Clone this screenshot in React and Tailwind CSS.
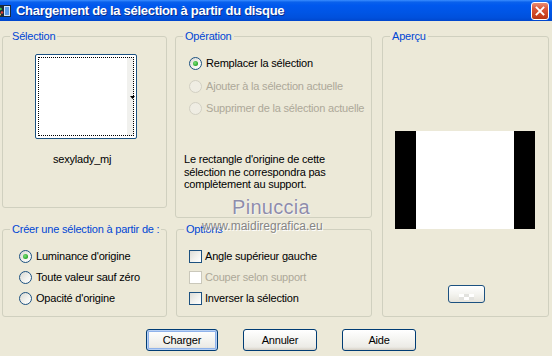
import React from "react";

function Radio({ checked, disabled }) {
  return (
    <span
      className={
        disabled
          ? "w-[13px] h-[13px] shrink-0 rounded-full border border-[#D2D0C3] bg-[#EFEDE3] flex items-center justify-center"
          : "w-[13px] h-[13px] shrink-0 rounded-full border border-[#1C5180] bg-[linear-gradient(135deg,#D8D8D2_0%,#F4F4F0_60%,#FFFFFF_100%)] flex items-center justify-center"
      }
    >
      {checked && (
        <span className="w-[5px] h-[5px] rounded-full bg-[radial-gradient(circle_at_40%_40%,#7BE07B_0%,#27A627_70%)]" />
      )}
    </span>
  );
}

function Check({ disabled }) {
  return (
    <span
      className={
        disabled
          ? "w-[13px] h-[13px] shrink-0 border border-[#CAC8BB] bg-white"
          : "w-[13px] h-[13px] shrink-0 border border-[#1C5180] bg-[linear-gradient(135deg,#DCDCD7_0%,#F2F2EE_55%,#FFFFFF_100%)]"
      }
    />
  );
}

function Group({ label, className, children }) {
  return (
    <div className={"relative border border-[#D0D0BF] rounded-[3px] " + className}>
      <span className="absolute left-[7px] top-[-7px] px-[2px] bg-[#ECE9D8] text-[#0046D5] leading-[13px] whitespace-nowrap">
        {label}
      </span>
      {children}
    </div>
  );
}

function XPButton({ children, isDefault, className }) {
  return (
    <div
      className={
        "h-[22px] rounded-[3px] border border-[#003C74] bg-[linear-gradient(to_bottom,#FFFFFF_0%,#F6F6F3_40%,#ECEBE6_85%,#D6D0C5_100%)] flex items-center justify-center text-black " +
        (isDefault ? "shadow-[inset_0_0_0_1px_#B7D0F4,inset_0_0_0_2px_#8FB2EA] " : "") +
        className
      }
    >
      {children}
    </div>
  );
}

export default function App() {
  return (
    <div className="relative w-[552px] h-[356px] overflow-hidden bg-[#ECE9D8] font-['Liberation_Sans',Arial,sans-serif] text-[11px] tracking-[-0.2px] text-black flex flex-col">
      {/* Title bar */}
      <div className="h-[21px] shrink-0 flex items-center bg-[linear-gradient(to_bottom,#3A8DFF_0%,#0A61EC_10%,#0058EE_25%,#0055E5_60%,#0050DC_85%,#0046CC_100%)]">
        <svg width="14" height="14" viewBox="0 0 14 14" className="ml-[-2px] shrink-0">
          <rect x="0" y="1" width="13" height="12" fill="#1B2A3A" />
          <rect x="6" y="2" width="6" height="10" fill="#CFE4FF" />
          <rect x="7" y="3" width="4" height="8" fill="#5A9BE8" />
          <circle cx="2.5" cy="5" r="1.3" fill="#36C24A" />
          <circle cx="4" cy="8.5" r="1.3" fill="#E0403A" />
          <circle cx="2" cy="10.5" r="1" fill="#F2C84B" />
        </svg>
        <span className="ml-[4px] text-white font-bold text-[13px] tracking-[-0.3px] leading-[21px] [text-shadow:1px_1px_0_#0A2D8C] font-['Liberation_Sans',Arial,sans-serif]">
          Chargement de la sélection à partir du disque
        </span>
        <div className="ml-auto mr-[3px] w-[18px] h-[18px] rounded-[3px] border border-white bg-[linear-gradient(to_bottom,#E88D74_0%,#D9573A_35%,#C8401E_80%,#B53514_100%)] flex items-center justify-center">
          <svg width="10" height="10" viewBox="0 0 10 10">
            <path d="M1.5 1.5 L8.5 8.5 M8.5 1.5 L1.5 8.5" stroke="white" strokeWidth="1.8" strokeLinecap="square" />
          </svg>
        </div>
      </div>

      {/* Body */}
      <div className="flex-1 flex flex-col pl-[2px] pt-[15px]">
        <div className="flex">
          {/* Column 1 */}
          <div className="w-[165px] flex flex-col">
            <Group label="Sélection" className="h-[172px]">
              <div className="flex flex-col items-start pl-[32px] pt-[17px]">
                <div className="relative w-[102px] h-[85px] rounded-[2px] border border-[#1C5180] bg-white p-[2px]">
                  <div className="absolute right-[2px] top-[2px] bottom-[2px] w-[7px] bg-[#F1F1EE]" />
                  <div className="relative w-full h-full border border-dotted border-black" />
                  <svg width="5" height="3" viewBox="0 0 5 3" className="absolute left-[94px] top-[41px]">
                    <path d="M0 0 H5 L2.5 3 Z" fill="black" />
                  </svg>
                </div>
                <div className="ml-[18px] mt-[14px] leading-[13px]">sexylady_mj</div>
              </div>
            </Group>
            <Group label="Créer une sélection à partir de :" className="mt-[21px] h-[88px]">
              <div className="flex flex-col pl-[16px] pt-[18px] gap-[5px]">
                <div className="h-[16px] flex items-center gap-[4px]">
                  <Radio checked />
                  <span>Luminance d'origine</span>
                </div>
                <div className="h-[16px] flex items-center gap-[4px]">
                  <Radio />
                  <span>Toute valeur sauf zéro</span>
                </div>
                <div className="h-[16px] flex items-center gap-[4px]">
                  <Radio />
                  <span>Opacité d'origine</span>
                </div>
              </div>
            </Group>
          </div>

          {/* Column 2 */}
          <div className="ml-[8px] w-[197px] flex flex-col">
            <Group label="Opération" className="h-[182px]">
              <div className="flex flex-col pl-[13px] pt-[18px]">
                <div className="h-[16px] flex items-center gap-[4px]">
                  <Radio checked />
                  <span>Remplacer la sélection</span>
                </div>
                <div className="mt-[7px] h-[16px] flex items-center gap-[4px] text-[#ACA899]">
                  <Radio disabled />
                  <span>Ajouter à la sélection actuelle</span>
                </div>
                <div className="mt-[6px] h-[16px] flex items-center gap-[4px] text-[#ACA899]">
                  <Radio disabled />
                  <span>Supprimer de la sélection actuelle</span>
                </div>
                <div className="mt-[37px] ml-[-5px] leading-[12.6px]">
                  Le rectangle d'origine de cette
                  <br />
                  sélection ne correspondra pas
                  <br />
                  complètement au support.
                </div>
              </div>
            </Group>
            <Group label="Options" className="mt-[11px] h-[88px] ml-[1px]">
              <div className="flex flex-col pl-[12px] pt-[18px] gap-[5px]">
                <div className="h-[16px] flex items-center gap-[3px]">
                  <Check />
                  <span>Angle supérieur gauche</span>
                </div>
                <div className="h-[16px] flex items-center gap-[3px] text-[#ACA899]">
                  <Check disabled />
                  <span>Couper selon support</span>
                </div>
                <div className="h-[16px] flex items-center gap-[3px]">
                  <Check />
                  <span>Inverser la sélection</span>
                </div>
              </div>
            </Group>
          </div>

          {/* Column 3 */}
          <div className="ml-[10px] w-[167px]">
            <Group label="Aperçu" className="h-[281px]">
              <div className="flex flex-col items-start pl-[12px] pt-[94px]">
                <div className="flex w-[140px] h-[98px]">
                  <div className="w-[21px] bg-black" />
                  <div className="flex-1 bg-white" />
                  <div className="w-[21px] bg-black" />
                </div>
                <div className="ml-[53px] mt-[56px] w-[37px] h-[18px] rounded-[3px] border border-[#1C5180] bg-[linear-gradient(to_bottom,#FFFFFF_0%,#F4F4F0_50%,#E6E4DC_100%)] flex items-end justify-center pb-[2px]">
                  <svg width="15" height="6" viewBox="0 0 15 6">
                    <rect x="0" y="0" width="5" height="3" fill="#FFFFFF" />
                    <rect x="5" y="3" width="5" height="3" fill="#FFFFFF" />
                    <rect x="10" y="0" width="5" height="3" fill="#FFFFFF" />
                    <rect x="5" y="0" width="5" height="3" fill="#E2E2DE" />
                    <rect x="0" y="3" width="5" height="3" fill="#E2E2DE" />
                    <rect x="10" y="3" width="5" height="3" fill="#E2E2DE" />
                  </svg>
                </div>
              </div>
            </Group>
          </div>
        </div>

        {/* Buttons */}
        <div className="mt-[12px] ml-[144px] flex gap-[25px]">
          <XPButton isDefault className="w-[72px]">Charger</XPButton>
          <XPButton className="w-[74px]">Annuler</XPButton>
          <XPButton className="w-[74px]">Aide</XPButton>
        </div>
      </div>

      {/* Watermark */}
      <div className="absolute left-[232px] top-[196px] text-[20px] leading-[22px] tracking-[0.3px] text-[#8F8DAA] [text-shadow:0_0_1px_#FFFFFF,1px_1px_0_#F4F3EE] font-['Liberation_Sans',Arial,sans-serif]">
        Pinuccia
      </div>
      <div className="absolute left-[202px] top-[219px] text-[12px] leading-[14px] tracking-[0px] text-[#858585] [text-shadow:1px_1px_0_#FFFFFF] font-['Liberation_Sans',Arial,sans-serif]">
        www.maidiregrafica.eu
      </div>
    </div>
  );
}
